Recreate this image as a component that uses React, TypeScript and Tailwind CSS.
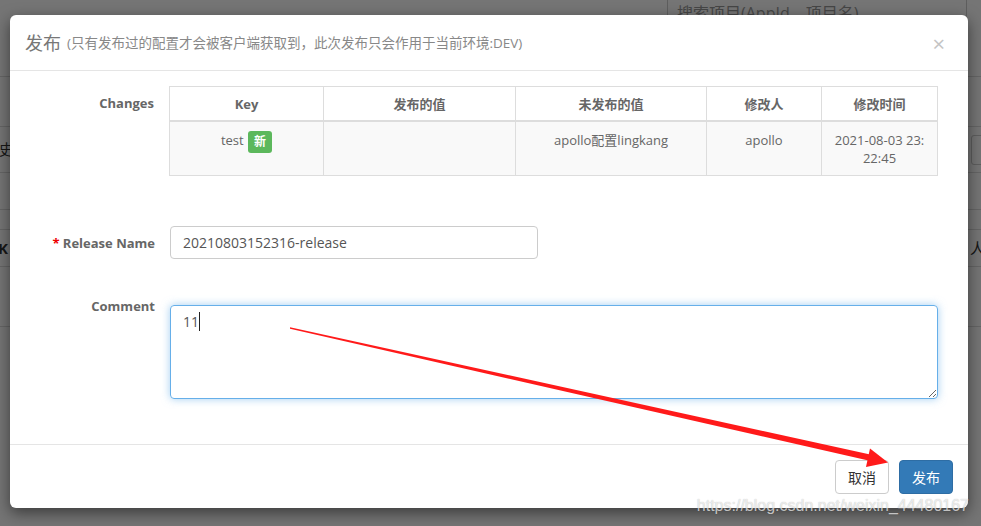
import React from 'react';

const font = { fontFamily: '"Open Sans", "Noto Sans CJK SC", sans-serif' };

const headers = ['Key', '发布的值', '未发布的值', '修改人', '修改时间'];
const widths = ['w-[154px]', 'w-[192px]', 'w-[191px]', 'w-[115px]', 'w-[116px]'];

function BackgroundPage() {
    return (
        <div className="w-full h-full bg-white text-[#333] text-[14px]">
            {/* top bar with search box */}
            <div className="h-[77px] border-b border-[#ddd] flex">
                <div className="ml-[667px] w-[300px] h-[30px] -mt-[6px] border border-[#ccc] bg-white px-[9px] pt-[8px] text-[16px] leading-[20px] text-[#999]">
                    搜索项目(AppId、项目名)
                </div>
            </div>
            <div className="h-[50px] border-b border-[#ddd]" />
            <div className="h-[46px] border-b border-[#ddd] flex items-center">
                <span className="-ml-[16px] text-[15px]">历史</span>
                <div className="ml-auto mr-[-20px] w-[30px] h-[30px] border border-[#ccc] rounded-[3px]" />
            </div>
            <div className="h-[37px] border-b border-[#ddd]" />
            <div className="h-[20px] border-b border-[#ddd]" />
            <div className="h-[37px] border-b border-[#ddd] flex items-center">
                <span className="-ml-[2px] font-bold text-[15px]">K</span>
                <span className="ml-auto mr-[-4px] text-[15px]">人</span>
            </div>
            <div className="h-[60px] border-b border-[#ddd]" />
        </div>
    );
}

function ChangesTable() {
    return (
        <table className="w-[768px] border-collapse table-fixed text-[13px] text-[#666]">
            <thead>
                <tr className="bg-white">
                    {headers.map((h, i) => (
                        <th
                            key={h}
                            className={`${widths[i]} border border-[#ddd] border-b-2 pt-[8px] pb-[7px] leading-[18px] font-bold text-center`}
                        >
                            {h}
                        </th>
                    ))}
                </tr>
            </thead>
            <tbody>
                <tr className="bg-[#f9f9f9] align-top">
                    <td className="border border-[#ddd] pt-[9px] pb-[8px] leading-[18px] text-center">
                        test{' '}
                        <span className="inline-block ml-[1px] bg-[#5cb85c] text-white font-bold text-[12px] leading-[14px] px-[6px] py-[4px] rounded-[3px] align-[-1px]">
                            新
                        </span>
                    </td>
                    <td className="border border-[#ddd] pt-[9px] pb-[8px] leading-[18px] text-center" />
                    <td className="border border-[#ddd] pt-[9px] pb-[8px] leading-[18px] text-center">apollo配置lingkang</td>
                    <td className="border border-[#ddd] pt-[9px] pb-[8px] leading-[18px] text-center">apollo</td>
                    <td className="border border-[#ddd] pt-[9px] pb-[8px] leading-[18px] text-center">
                        2021-08-03 23:
                        <br />
                        22:45
                    </td>
                </tr>
            </tbody>
        </table>
    );
}

function ReleaseModal() {
    return (
        <div className="absolute left-[10px] top-[15px] w-[958px] h-[493px] bg-white rounded-[6px] shadow-[0_5px_15px_rgba(0,0,0,0.5)] flex flex-col">
            {/* Header */}
            <div className="h-[56px] border-b border-[#e5e5e5] px-[15px] flex items-center">
                <span className="text-[18px] text-[#777] leading-[24px]">发布</span>
                <span className="ml-[6px] text-[13.5px] text-[#888] leading-[24px]">
                    (只有发布过的配置才会被客户端获取到，此次发布只会作用于当前环境:DEV)
                </span>
                <span className="ml-auto mr-[8px] text-[22px] text-[#c4c4c4] leading-none">×</span>
            </div>

            {/* Body */}
            <div className="flex-1 pt-[15px] pr-[30px]">
                <div className="flex">
                    <label className="w-[145px] text-right text-[13px] font-bold text-[#666] leading-[18px] pt-[8px]">
                        Changes
                    </label>
                    <div className="ml-[15px]">
                        <ChangesTable />
                    </div>
                </div>

                <div className="flex items-center mt-[50px]">
                    <label className="w-[145px] text-right text-[13px] font-bold text-[#666] leading-[18px]">
                        <span className="text-[#e00]">*</span> Release Name
                    </label>
                    <div className="ml-[15px] w-[368px] h-[33px] border border-[#ccc] rounded-[4px] px-[12px] flex items-center text-[14px] text-[#555]">
                        20210803152316-release
                    </div>
                </div>

                <div className="flex mt-[38px]">
                    <label className="w-[145px] text-right text-[13px] font-bold text-[#666] leading-[18px]">
                        Comment
                    </label>
                    <div className="ml-[15px] mt-[8px] relative flex-1">
                        <textarea
                            readOnly
                            defaultValue="11"
                            className="block w-full h-[94px] border border-[#66afe9] rounded-[4px] px-[12px] py-[6px] text-[14px] leading-[20px] text-[#555] outline-none shadow-[0_0_8px_rgba(102,175,233,0.6)]"
                            style={font}
                        />
                        <span className="absolute left-[29px] top-[7px] w-px h-[19px] bg-[#222]" />
                    </div>
                </div>
            </div>

            {/* Footer */}
            <div className="h-[64px] border-t border-[#e5e5e5] flex justify-end items-start pt-[15px] pr-[15px] gap-[10px]">
                <button className="h-[34px] px-[12px] border border-[#ccc] rounded-[4px] bg-white text-[14px] text-[#333]">
                    取消
                </button>
                <button className="h-[34px] px-[12px] border border-[#2e6da4] rounded-[4px] bg-[#337ab7] text-[14px] text-white">
                    发布
                </button>
            </div>
        </div>
    );
}

function RedArrow() {
    return (
        <svg className="absolute left-0 top-0 pointer-events-none" width="981" height="526" viewBox="0 0 981 526">
            <polygon points="290,327.2 290,328.8 870.6,461 869,454.3" fill="#ff1a1a" />
            <polygon points="888,462.5 870,448.5 866,467" fill="#ff1a1a" />
        </svg>
    );
}

export default function App() {
    return (
        <div className="relative w-[981px] h-[526px] overflow-hidden" style={font}>
            <BackgroundPage />
            <div className="absolute inset-0 bg-black/[0.54]" />
            <ReleaseModal />
            <RedArrow />
            <div
                className="absolute right-[12px] top-[496px] text-[16px] leading-[20px] text-white/70 [text-shadow:0_0_1px_rgba(0,0,0,0.3)]"
                style={{ fontFamily: '"Liberation Sans", Arial, sans-serif' }}
            >
                https://blog.csdn.net/weixin_44480167
            </div>
        </div>
    );
}
